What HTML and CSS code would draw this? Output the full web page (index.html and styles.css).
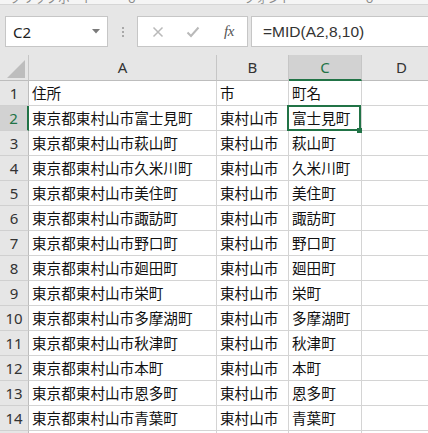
FILE: index.html
```html
<!DOCTYPE html>
<html lang="ja">
<head>
<meta charset="utf-8">
<link rel="stylesheet" href="styles.css">
</head>
<body>
<div class="ribbon-tail">
  <span class="rl rl1">クリップボード</span>
  <span class="rl rl2">ᴗ</span>
  <span class="rl rl3">フォント</span>
  <span class="rl rl4">ᴗ</span>
  <span class="rl rl5">配置</span>
</div>
<div class="fbar">
  <div class="namebox">
    <span class="nb-text">C2</span>
    <svg class="nb-arrow" width="8" height="5" viewBox="0 0 8 5"><polygon points="0,0 8,0 4,4.5" fill="#7a7a7a"/></svg>
  </div>
  <div class="grip"><i></i><i></i><i></i></div>
  <div class="fbtns">
    <svg class="btn" width="12" height="12" viewBox="0 0 12 12"><path d="M1.5 1.5 L10.5 10.5 M10.5 1.5 L1.5 10.5" stroke="#b9b9b9" stroke-width="1.5" fill="none"/></svg>
    <svg class="btn" width="14" height="12" viewBox="0 0 14 12"><path d="M1.5 6.5 L5 10 L12.5 1.5" stroke="#b9b9b9" stroke-width="2" fill="none"/></svg>
    <span class="fx">fx</span>
  </div>
  <div class="finput">=MID(A2,8,10)</div>
</div>
<div class="sheet">
  <div class="corner"><svg width="18" height="18" viewBox="0 0 18 18"><polygon points="18,0 18,18 0,18" fill="#bdbdbd"/></svg></div>
  <div class="ch">A</div>
  <div class="ch">B</div>
  <div class="ch sel">C</div>
  <div class="ch">D</div>

  <div class="rh">1</div><div class="c">住所</div><div class="c">市</div><div class="c">町名</div><div class="c"></div>
  <div class="rh sel">2</div><div class="c">東京都東村山市富士見町</div><div class="c">東村山市</div><div class="c active">富士見町</div><div class="c"></div>
  <div class="rh">3</div><div class="c">東京都東村山市萩山町</div><div class="c">東村山市</div><div class="c">萩山町</div><div class="c"></div>
  <div class="rh">4</div><div class="c">東京都東村山市久米川町</div><div class="c">東村山市</div><div class="c">久米川町</div><div class="c"></div>
  <div class="rh">5</div><div class="c">東京都東村山市美住町</div><div class="c">東村山市</div><div class="c">美住町</div><div class="c"></div>
  <div class="rh">6</div><div class="c">東京都東村山市諏訪町</div><div class="c">東村山市</div><div class="c">諏訪町</div><div class="c"></div>
  <div class="rh">7</div><div class="c">東京都東村山市野口町</div><div class="c">東村山市</div><div class="c">野口町</div><div class="c"></div>
  <div class="rh">8</div><div class="c">東京都東村山市廻田町</div><div class="c">東村山市</div><div class="c">廻田町</div><div class="c"></div>
  <div class="rh">9</div><div class="c">東京都東村山市栄町</div><div class="c">東村山市</div><div class="c">栄町</div><div class="c"></div>
  <div class="rh">10</div><div class="c">東京都東村山市多摩湖町</div><div class="c">東村山市</div><div class="c">多摩湖町</div><div class="c"></div>
  <div class="rh">11</div><div class="c">東京都東村山市秋津町</div><div class="c">東村山市</div><div class="c">秋津町</div><div class="c"></div>
  <div class="rh">12</div><div class="c">東京都東村山市本町</div><div class="c">東村山市</div><div class="c">本町</div><div class="c"></div>
  <div class="rh">13</div><div class="c">東京都東村山市恩多町</div><div class="c">東村山市</div><div class="c">恩多町</div><div class="c"></div>
  <div class="rh">14</div><div class="c">東京都東村山市青葉町</div><div class="c">東村山市</div><div class="c">青葉町</div><div class="c"></div>
  <div class="rh">15</div><div class="c"></div><div class="c"></div><div class="c"></div><div class="c"></div>
</div>
</body>
</html>
```
FILE: styles.css
```css
html, body {
  margin: 0;
  padding: 0;
  width: 428px;
  height: 433px;
  overflow: hidden;
  background: #fff;
  font-family: "Noto Sans CJK JP", "Noto Sans", sans-serif;
}

.ribbon-tail {
  height: 4px;
  border-bottom: 1px solid #d6d6d6;
  background: #f5f5f5;
  overflow: hidden;
  display: flex;
  align-items: flex-end;
}
.rl {
  font-size: 12px;
  line-height: 12px;
  color: #8a8a8a;
  white-space: nowrap;
}
.rl1 { margin-left: 10px; }
.rl2 { margin-left: 34px; }
.rl3 { margin-left: 108px; }
.rl4 { margin-left: 74px; }
.rl5 { margin-left: 60px; }

.fbar {
  display: flex;
  align-items: stretch;
  background: #e6e6e6;
  padding: 11px 0 8px 5px;
  height: 31px;
}
.namebox {
  width: 103px;
  box-sizing: border-box;
  background: #fff;
  border: 1px solid #c6c6c6;
  display: flex;
  align-items: center;
  justify-content: space-between;
  padding: 0 7px 0 7px;
}
.nb-text {
  font-family: "Noto Sans", "Noto Sans CJK JP", sans-serif;
  font-size: 15px;
  color: #222;
  margin-top: 1px;
}
.nb-arrow { margin-top: -1px; }
.grip {
  width: 29px;
  display: flex;
  flex-direction: column;
  align-items: center;
  justify-content: center;
  gap: 2px;
}
.grip i {
  display: block;
  width: 2px;
  height: 2px;
  background: #a8a8a8;
}
.fbtns {
  width: 111px;
  box-sizing: border-box;
  background: #fff;
  border: 1px solid #c6c6c6;
  display: flex;
  align-items: center;
  padding-left: 14px;
  gap: 22px;
}
.fx {
  font-family: "Liberation Serif", serif;
  font-style: italic;
  font-size: 15px;
  color: #555;
  margin-left: 2px;
  letter-spacing: -0.5px;
}
.finput {
  flex: 1;
  margin-left: 3px;
  box-sizing: border-box;
  background: #fff;
  border: 1px solid #c6c6c6;
  border-right: none;
  padding-left: 11px;
  font-family: "Liberation Sans", sans-serif;
  font-size: 15.5px;
  color: #333;
  display: flex;
  align-items: center;
}

.sheet {
  display: grid;
  grid-template-columns: 29px 188px 72px 73px 80px;
  grid-template-rows: 26px;
  grid-auto-rows: 25px;
  width: 442px;
}
.corner {
  background: #e6e6e6;
  border-right: 1px solid #c6c6c6;
  border-bottom: 1px solid #bdbdbd;
  box-sizing: border-box;
  display: flex;
  align-items: flex-end;
  justify-content: flex-end;
  padding: 0 3px 2px 0;
}
.corner svg { display: block; }
.ch {
  background: #e6e6e6;
  border-right: 1px solid #c6c6c6;
  border-bottom: 1px solid #bdbdbd;
  box-sizing: border-box;
  text-align: center;
  font-family: "Noto Sans", "Noto Sans CJK JP", sans-serif;
  font-size: 15px;
  line-height: 25px;
  color: #333;
}
.ch.sel {
  background: #d2d2d2;
  color: #217346;
  border-bottom: 2px solid #217346;
}
.rh {
  background: #e6e6e6;
  border-right: 1px solid #bdbdbd;
  border-bottom: 1px solid #d0d0d0;
  box-sizing: border-box;
  text-align: center;
  font-family: "Noto Sans", "Noto Sans CJK JP", sans-serif;
  font-size: 15px;
  line-height: 24px;
  color: #333;
}
.rh.sel {
  background: #d2d2d2;
  color: #217346;
  border-right: 2px solid #217346;
}
.c {
  border-right: 1px solid #d4d4d4;
  border-bottom: 1px solid #d4d4d4;
  box-sizing: border-box;
  padding-left: 3px;
  font-size: 14.6px;
  line-height: 24px;
  color: #111;
  white-space: nowrap;
  overflow: hidden;
}
.c.active {
  position: relative;
  overflow: visible;
}
.c.active::after {
  content: "";
  position: absolute;
  top: -1px;
  left: -2px;
  right: 0;
  bottom: -1px;
  border: 2px solid #217346;
  pointer-events: none;
}
.c.active::before {
  content: "";
  position: absolute;
  right: -1px;
  bottom: -3px;
  width: 5px;
  height: 5px;
  background: #217346;
  z-index: 2;
}
```
